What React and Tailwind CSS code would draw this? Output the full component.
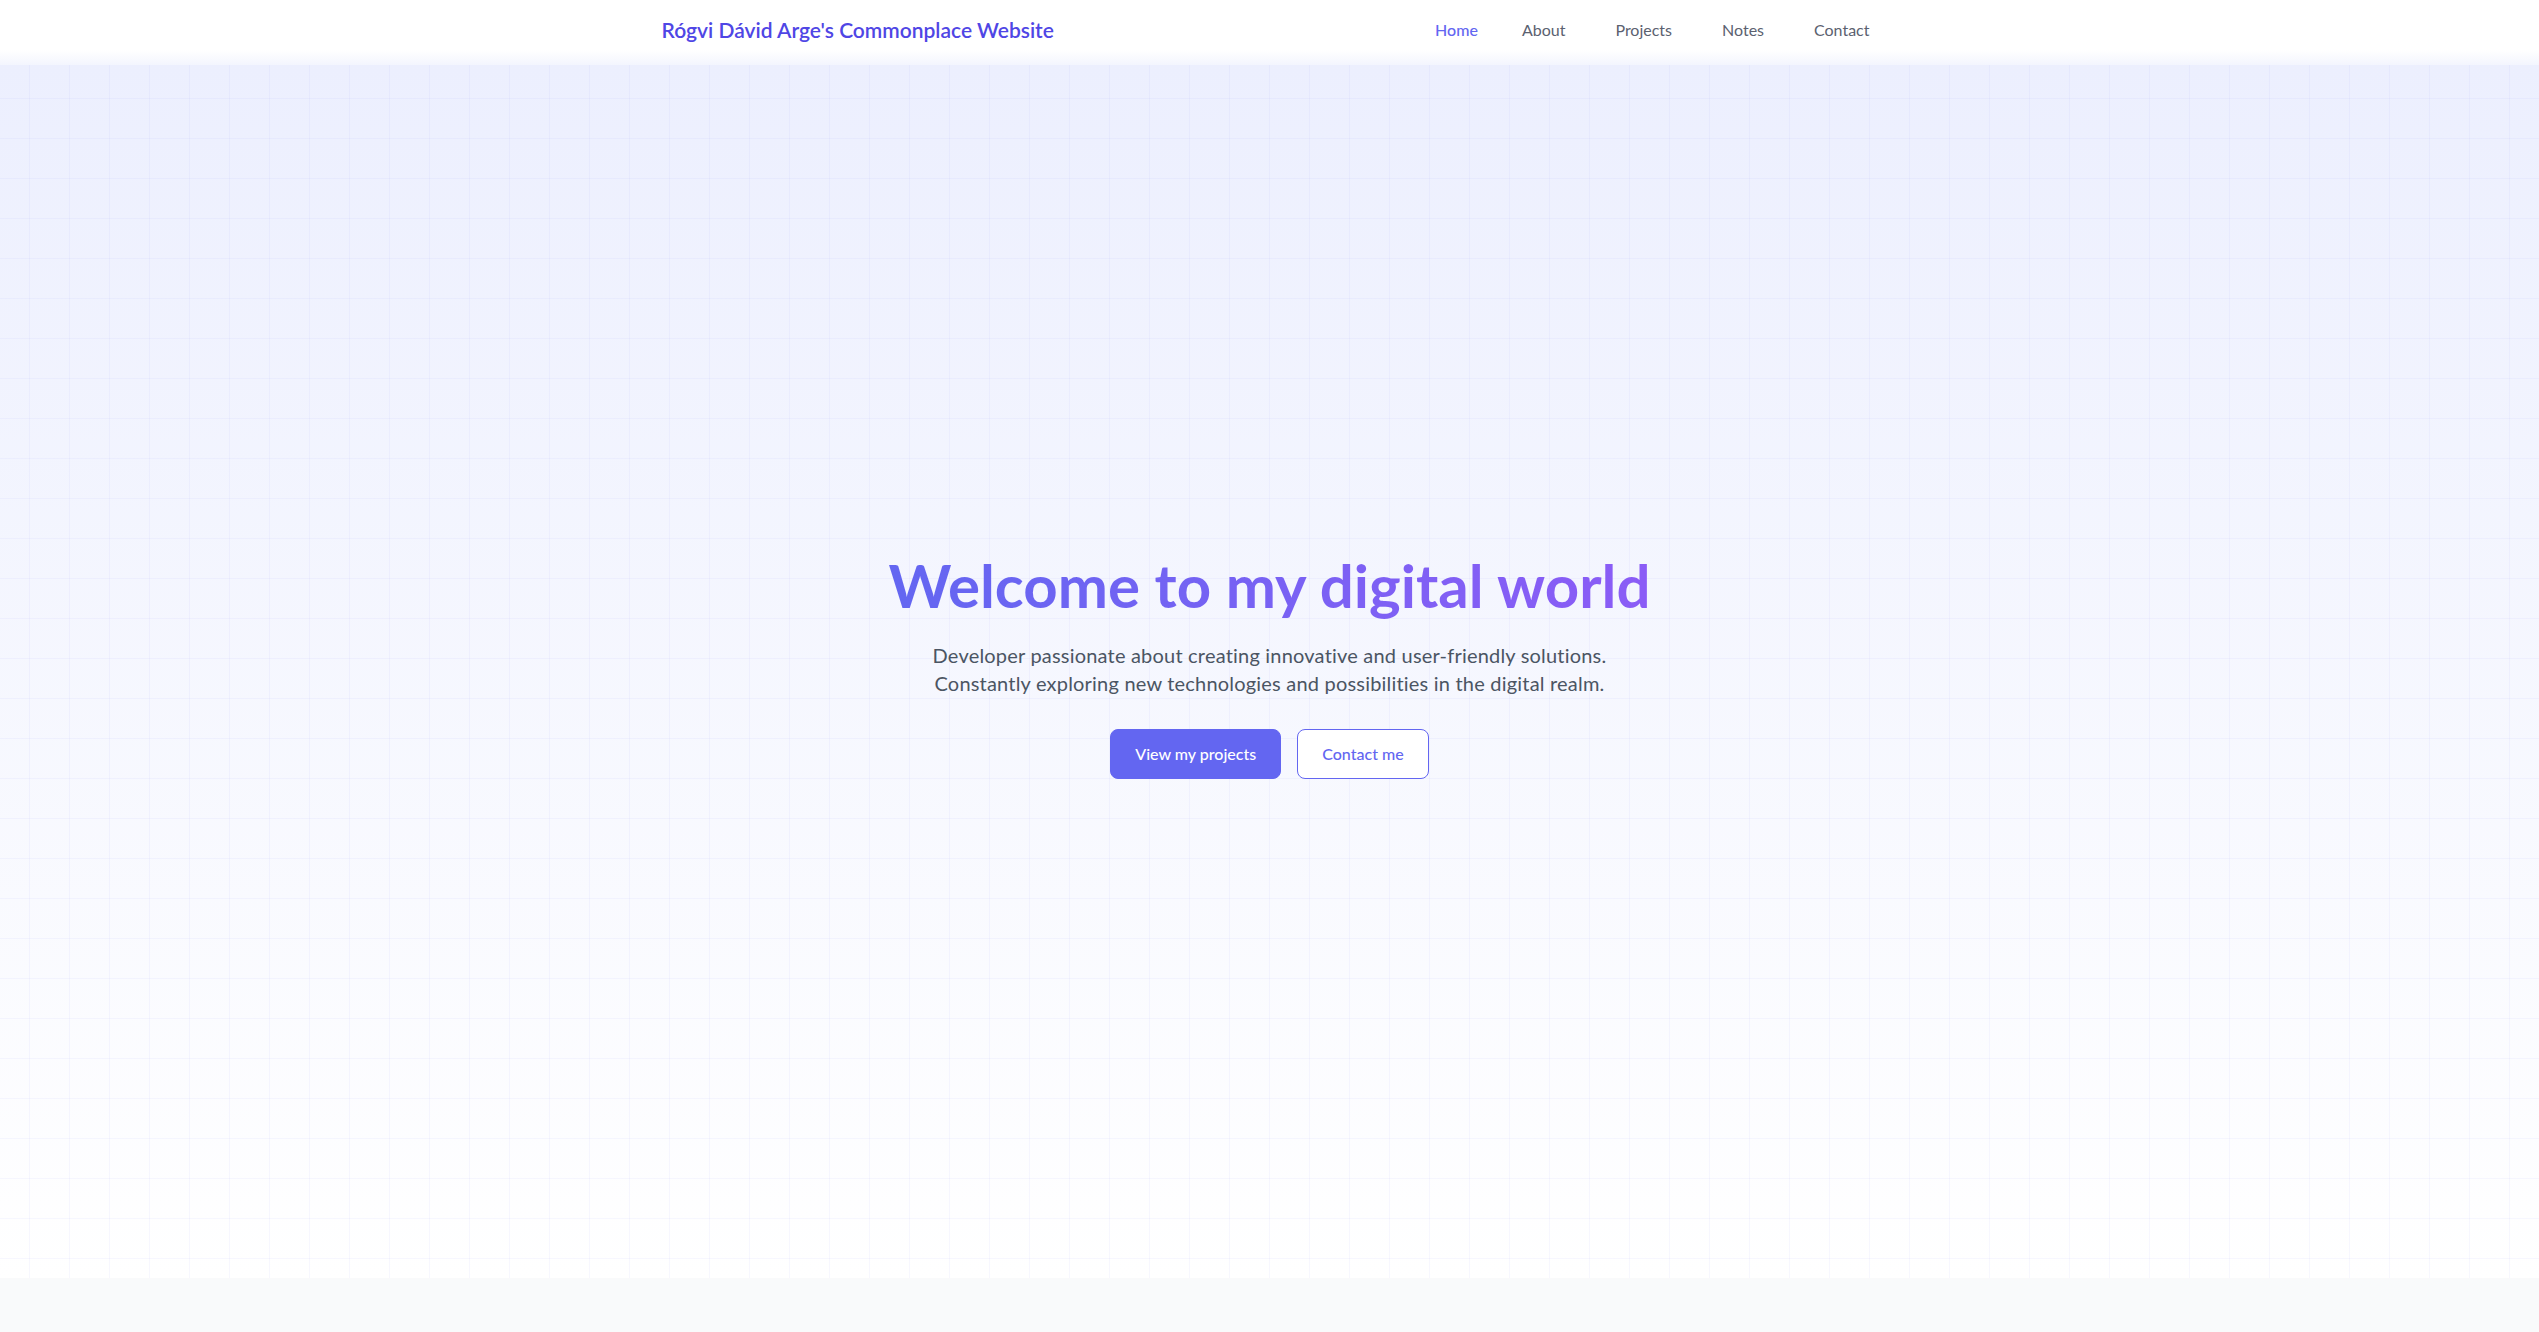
export default function App() {
  return (
    <div className="w-full min-h-[1332px] bg-[#f9fafb] font-[Lato,'Open_Sans',sans-serif]">
      <header className="h-[65px] bg-[linear-gradient(to_bottom,#ffffff_77%,#f3f5fe)]">
        <div className="mx-auto flex h-[60px] max-w-[1216px] items-center justify-between">
          <a className="text-[21px] leading-7 font-semibold text-[#4f46e5]">
            Rógvi Dávid Arge's Commonplace Website
          </a>
          <nav className="flex items-center gap-[34px] text-[16px] leading-6">
            <a className="-mr-[6px] px-2 font-medium text-[#6366f1]">Home</a>
            <a className="px-2 text-[#5b6170]">About</a>
            <a className="px-2 text-[#5b6170]">Projects</a>
            <a className="px-2 text-[#5b6170]">Notes</a>
            <a className="px-2 text-[#5b6170]">Contact</a>
          </nav>
        </div>
      </header>

      <section className="flex h-[1213px] flex-col items-center justify-center pb-4 text-center bg-[linear-gradient(to_right,rgba(99,102,241,0.05)_1px,transparent_1px),linear-gradient(to_bottom,rgba(99,102,241,0.05)_1px,transparent_1px),linear-gradient(to_bottom,#eceffe,#ffffff)] bg-[size:40px_40px,40px_40px,100%_100%] bg-[position:29px_33px,29px_33px,0_0]">
        <h1 className="inline-block bg-linear-to-r from-[#6366f1] to-[#8b5cf6] bg-clip-text text-[60px] leading-[1.2] font-bold text-transparent">
          Welcome to my digital world
        </h1>
        <p className="mt-5 text-[20px] leading-7 tracking-[0.01em] text-[#4b5563]">
          Developer passionate about creating innovative and user-friendly solutions.
          <br />
          Constantly exploring new technologies and possibilities in the digital realm.
        </p>
        <div className="mt-8 flex items-center gap-4">
          <button className="rounded-lg border border-[#6366f1] bg-[#6366f1] px-6 py-3 text-[16px] leading-6 font-medium text-white">
            View my projects
          </button>
          <button className="rounded-lg border border-[#6366f1] bg-white px-6 py-3 text-[16px] leading-6 font-medium text-[#6366f1]">
            Contact me
          </button>
        </div>
      </section>

      <section className="h-[54px] bg-[#f9fafb]" />
    </div>
  );
}
